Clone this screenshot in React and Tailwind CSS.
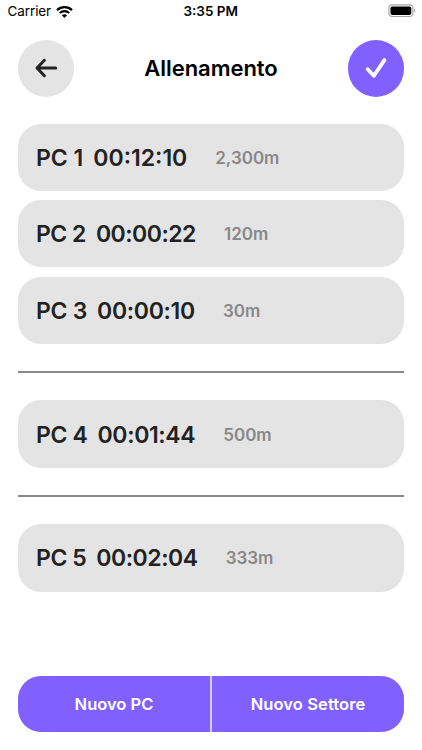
const SECTORS = [
  [
    { id: 1, time: '00:12:10', distance: '2,300m', tracking: '' },
    { id: 2, time: '00:00:22', distance: '120m', tracking: 'tracking-[-0.5px]' },
    { id: 3, time: '00:00:10', distance: '30m', tracking: 'tracking-[-0.3px]' },
  ],
  [{ id: 4, time: '00:01:44', distance: '500m', tracking: 'tracking-[-0.35px]' }],
  [{ id: 5, time: '00:02:04', distance: '333m', tracking: 'tracking-[-0.45px]' }],
]

function StatusBar() {
  return (
    <div className="grid h-[23px] grid-cols-3 items-center pr-[6px] pl-[7.5px] text-[13.5px] text-black">
      <div className="flex items-center gap-[5px]">
        <span className="tracking-[-0.1px]">Carrier</span>
        <svg width="17" height="12" viewBox="0 0 17 12" fill="none" stroke="currentColor">
          <path d="M1 4.1C5.1.1 11.9.1 16 4.1" strokeWidth="2.2" />
          <path d="M3.8 7C6.4 4.5 10.6 4.5 13.2 7" strokeWidth="2.1" />
          <path d="M8.5 12 5.9 9.3C7.3 7.9 9.7 7.9 11.1 9.3Z" fill="currentColor" stroke="none" />
        </svg>
      </div>
      <span className="-ml-[2px] text-center font-semibold whitespace-nowrap">3:35 PM</span>
      <svg className="mb-px justify-self-end" width="28" height="14" viewBox="0 0 28 14">
        <rect x="0.9" y="0.9" width="24" height="11.6" rx="3.4" fill="none" stroke="#a3a3a3" strokeWidth="1.1" />
        <rect x="2.5" y="2.4" width="20.8" height="8.6" rx="1.9" fill="#000" />
        <path d="M26 4.8c1.6.6 1.6 3.2 0 3.8z" fill="#a3a3a3" />
      </svg>
    </div>
  )
}

function Header() {
  return (
    <header className="mt-[17px] flex h-[57px] items-center justify-between px-[18px]">
      <button className="flex size-[56.4px] items-center justify-center rounded-full bg-[#e4e4e4] text-[#222]">
        <svg width="24" height="20" viewBox="0 0 24 20" fill="none" stroke="currentColor" strokeWidth="3" strokeLinecap="round" strokeLinejoin="round">
          <path d="M21.7 10H3.3M10.4 2.3 3 10l7.4 7.7" />
        </svg>
      </button>
      <h1 className="text-[22px] font-semibold tracking-[-0.05px] text-black">Allenamento</h1>
      <button className="flex size-[56.4px] items-center justify-center rounded-full bg-[#8061ff] text-white">
        <svg width="24" height="22" viewBox="0 0 24 22" fill="none" stroke="currentColor" strokeWidth="3.8" strokeLinecap="round" strokeLinejoin="round">
          <path d="m3.7 12.2 6.2 6.6L20.4 3.1" />
        </svg>
      </button>
    </header>
  )
}

function Checkpoint({ id, time, distance, tracking }) {
  return (
    <div className="flex h-[67.4px] items-center rounded-[23px] bg-[#e4e4e4] pt-[1.5px] pl-[18px] font-semibold text-[#222]">
      <span className={`text-[23px] ${tracking}`}>PC {id}</span>
      <span className={`ml-[10px] text-[23px] ${tracking}`}>{time}</span>
      <span className="ml-[28px] pt-px text-[17px] text-[#888]">{distance}</span>
    </div>
  )
}

export default function App() {
  return (
    <div className="flex h-[750px] w-[422px] flex-col overflow-hidden bg-white font-[Inter,sans-serif]">
      <StatusBar />
      <Header />

      <main className="mt-[26.5px] flex-1 px-[18px]">
        {SECTORS.map((points, i) => (
          <section key={i}>
            {i > 0 && <div className="mt-[27px] mb-[27px] h-[2.4px] bg-[#888]" />}
            <div className="flex flex-col gap-[9.2px]">
              {points.map((point) => (
                <Checkpoint key={point.id} {...point} />
              ))}
            </div>
          </section>
        ))}
      </main>

      <footer className="mx-[18px] mb-[18px] flex h-[56px] gap-[2px] overflow-hidden rounded-[23px] bg-[#d3cdec] text-[16.5px] font-semibold text-white">
        <button className="flex-1 bg-[#8061ff]">Nuovo PC</button>
        <button className="flex-1 bg-[#8061ff] tracking-[0.1px]">Nuovo Settore</button>
      </footer>
    </div>
  )
}
